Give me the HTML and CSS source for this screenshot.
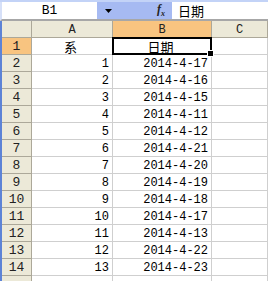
FILE: index.html
```html
<!DOCTYPE html>
<html lang="zh-CN">
<head>
    <meta charset="UTF-8">
    <title>Sheet</title>
    <link rel="stylesheet" href="styles.css">
</head>
<body>
    <div class="window">
        <!-- 编辑栏 -->
        <div class="formula-bar">
            <div class="namebox">B1</div>
            <div class="fx-area">
                <svg class="arrow" width="7" height="4" viewBox="0 0 7 4"><path d="M0 0h7L3.5 4z" fill="#000"/></svg>
                <span class="fx">f<sub>x</sub></span>
            </div>
            <div class="formula">日期</div>
        </div>

        <!-- 工作表 -->
        <div class="sheet">
            <div class="corner"></div>
            <div class="col-head">A</div>
            <div class="col-head active">B</div>
            <div class="col-head">C</div>

            <div class="row-head active">1</div>
            <div class="cell center cjk">系</div>
            <div class="cell center cjk selected">日期</div>
            <div class="cell"></div>

            <div class="row-head">2</div><div class="cell">1</div><div class="cell">2014-4-17</div><div class="cell"></div>
            <div class="row-head">3</div><div class="cell">2</div><div class="cell">2014-4-16</div><div class="cell"></div>
            <div class="row-head">4</div><div class="cell">3</div><div class="cell">2014-4-15</div><div class="cell"></div>
            <div class="row-head">5</div><div class="cell">4</div><div class="cell">2014-4-11</div><div class="cell"></div>
            <div class="row-head">6</div><div class="cell">5</div><div class="cell">2014-4-12</div><div class="cell"></div>
            <div class="row-head">7</div><div class="cell">6</div><div class="cell">2014-4-21</div><div class="cell"></div>
            <div class="row-head">8</div><div class="cell">7</div><div class="cell">2014-4-20</div><div class="cell"></div>
            <div class="row-head">9</div><div class="cell">8</div><div class="cell">2014-4-19</div><div class="cell"></div>
            <div class="row-head">10</div><div class="cell">9</div><div class="cell">2014-4-18</div><div class="cell"></div>
            <div class="row-head">11</div><div class="cell">10</div><div class="cell">2014-4-17</div><div class="cell"></div>
            <div class="row-head">12</div><div class="cell">11</div><div class="cell">2014-4-13</div><div class="cell"></div>
            <div class="row-head">13</div><div class="cell">12</div><div class="cell">2014-4-22</div><div class="cell"></div>
            <div class="row-head">14</div><div class="cell">13</div><div class="cell">2014-4-23</div><div class="cell"></div>
            <div class="row-head"></div><div class="cell"></div><div class="cell"></div><div class="cell"></div>
        </div>
    </div>
</body>
</html>
```

FILE: styles.css
```css
body {
    margin: 0;
    overflow: hidden;
    background: #fff;
    font-family: "Liberation Mono", "Noto Sans CJK SC", monospace;
    font-size: 12px;
    color: #000;
}
.window {
    width: 268px;
    height: 281px;
    overflow: hidden;
    border-top: 2px solid #c3d3f7;
}
.formula-bar {
    display: flex;
    height: 17px;
    border-left: 2px solid #d6e0f8;
    border-bottom: 2px solid #a7a7a7;
    background: #fff;
}
.namebox {
    width: 95px;
    text-align: center;
    line-height: 18px;
    font-size: 13px;
}
.fx-area {
    width: 75px;
    display: flex;
    align-items: center;
    justify-content: space-between;
    padding: 0 7px 0 8px;
    box-sizing: border-box;
    background: #a6baf2;
}
.fx {
    font-family: "Liberation Serif", serif;
    font-style: italic;
    font-weight: bold;
    font-size: 12px;
    color: #222;
}
.fx sub {
    font-size: 8px;
}
.formula {
    flex: 1;
    padding-left: 6px;
    line-height: 17px;
    font-family: "Noto Sans CJK SC", sans-serif;
    font-size: 13px;
}
.sheet {
    display: grid;
    grid-template-columns: 30px 81px 99px 1fr;
    grid-auto-rows: 17px;
    border-left: 2px solid #5d83d6;
}
.corner,
.col-head,
.row-head {
    background: #ece9d8;
    border-right: 1px solid #aca899;
    border-bottom: 1px solid #aca899;
    text-align: center;
    padding-top: 2px;
    line-height: 14px;
    color: #222;
}
.col-head {
    font-size: 12px;
}
.row-head {
    font-size: 13px;
}
.col-head.active,
.row-head.active {
    background: #f8c480;
}
.cell {
    border-right: 1px solid #cfcfcf;
    border-bottom: 1px solid #cfcfcf;
    text-align: right;
    padding: 2px 3px 0 0;
    line-height: 14px;
    font-size: 12px;
    white-space: nowrap;
}
.cell.center {
    text-align: center;
}
.cell.cjk {
    font-family: "Noto Sans CJK SC", sans-serif;
    font-size: 13px;
}
.selected {
    position: relative;
}
.selected::after {
    content: "";
    position: absolute;
    left: -1px;
    top: -1px;
    right: -1px;
    bottom: -1px;
    border: 2px solid #000;
}
.selected::before {
    content: "";
    position: absolute;
    right: -3px;
    bottom: -3px;
    width: 5px;
    height: 5px;
    background: #000;
    border: 1px solid #fff;
    z-index: 1;
}
```
